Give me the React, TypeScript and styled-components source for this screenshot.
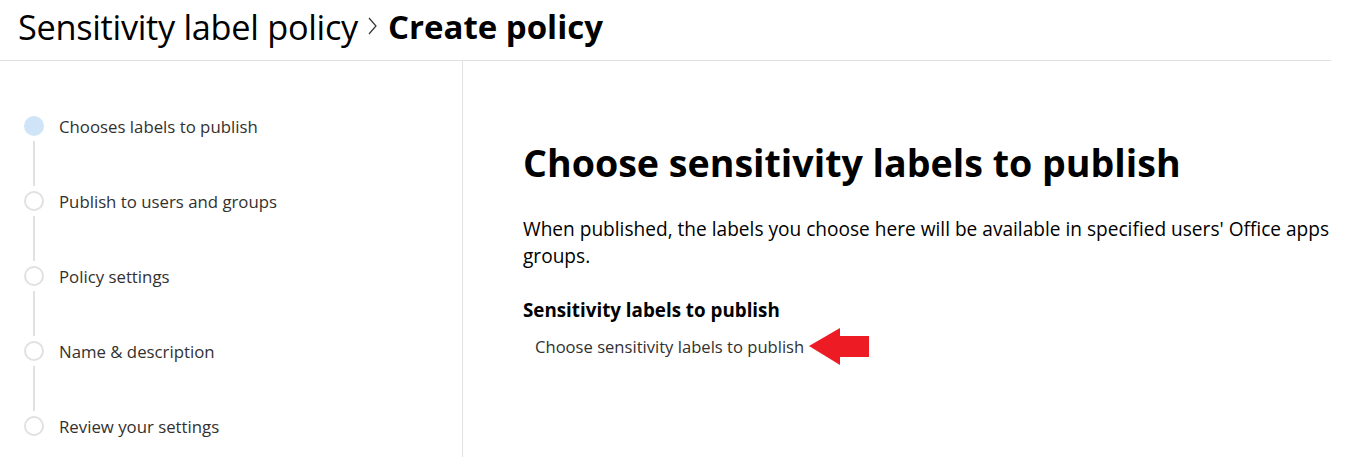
import styled, { createGlobalStyle } from "styled-components";

const GlobalStyle = createGlobalStyle`
  html, body {
    margin: 0;
    padding: 0;
    background: #ffffff;
    font-family: "Open Sans", "Noto Sans", sans-serif;
    color: #000000;
    overflow: hidden;
  }
`;

const Page = styled.div`
  width: 1331px;
  overflow: hidden;
`;

const Header = styled.header`
  height: 61px;
  border-bottom: 1px solid #e1e1e1;
  display: flex;
  align-items: center;
  padding: 0 0 8px 18px;
  box-sizing: border-box;
  white-space: nowrap;
`;

const Crumb = styled.span`
  font-size: 34.3px;
  font-weight: 400;
  letter-spacing: -0.3px;
`;

const Chevron = styled.svg`
  margin: 0 11px 0 10px;
  flex-shrink: 0;
`;

const Current = styled.span`
  font-size: 33px;
  font-weight: 700;
`;

const Body = styled.div`
  display: flex;
  height: 396px;
`;

const Sidebar = styled.nav`
  width: 463px;
  flex-shrink: 0;
  border-right: 1px solid #e1e1e1;
  padding: 55px 0 0 24px;
  box-sizing: border-box;
`;

const Step = styled.div`
  display: flex;
  align-items: center;
  gap: 15px;
  height: 20px;
  font-size: 16.8px;
  color: #323130;
`;

const Dot = styled.span<{ $active?: boolean }>`
  width: 20px;
  height: 20px;
  box-sizing: border-box;
  border-radius: 50%;
  flex-shrink: 0;
  background: ${(p) => (p.$active ? "#cfe4f7" : "#ffffff")};
  border: ${(p) => (p.$active ? "none" : "2px solid #e1e1e1")};
`;

const Connector = styled.div`
  width: 2px;
  height: 45px;
  margin: 5px 0 5px 9px;
  background: #e1e1e1;
`;

const Main = styled.main`
  flex: 1;
  padding: 77px 0 0 60px;
  min-width: 0;
  overflow: hidden;
`;

const Title = styled.h1`
  margin: 0;
  font-size: 37.6px;
  font-weight: 700;
  line-height: 50px;
  white-space: nowrap;
`;

const Intro = styled.p`
  margin: 28px 0 0;
  width: 900px;
  font-size: 19.1px;
  line-height: 27px;
  color: #000;
`;

const SectionLabel = styled.h2`
  margin: 28px 0 0;
  font-size: 18.8px;
  font-weight: 700;
  line-height: 24px;
`;

const PickerRow = styled.div`
  display: flex;
  align-items: center;
  margin-top: 6px;
  padding-left: 12px;
  height: 37px;
`;

const PickerLink = styled.span`
  font-size: 16.6px;
  color: #323130;
`;

const Arrow = styled.svg`
  margin-left: 5px;
  flex-shrink: 0;
`;

const steps = [
  "Chooses labels to publish",
  "Publish to users and groups",
  "Policy settings",
  "Name & description",
  "Review your settings",
];

export default function App() {
  return (
    <Page>
      <GlobalStyle />
      <Header>
        <Crumb>Sensitivity label policy</Crumb>
        <Chevron width="9" height="18" viewBox="0 0 9 18">
          <polyline
            points="1,1 8,9 1,17"
            fill="none"
            stroke="#333333"
            strokeWidth="1.2"
          />
        </Chevron>
        <Current>Create policy</Current>
      </Header>
      <Body>
        <Sidebar>
          {steps.map((s, i) => (
            <div key={s}>
              <Step>
                <Dot $active={i === 0} />
                {s}
              </Step>
              {i < steps.length - 1 && <Connector />}
            </div>
          ))}
        </Sidebar>
        <Main>
          <Title>Choose sensitivity labels to publish</Title>
          <Intro>
            When published, the labels you choose here will be available in
            specified users' Office apps and groups.
          </Intro>
          <SectionLabel>Sensitivity labels to publish</SectionLabel>
          <PickerRow>
            <PickerLink>Choose sensitivity labels to publish</PickerLink>
            <Arrow width="60" height="37" viewBox="0 0 60 37">
              <path
                d="M0 18 L31 0 L31 8 L60 8 L60 29 L31 29 L31 37 Z"
                fill="#ed1c24"
              />
            </Arrow>
          </PickerRow>
        </Main>
      </Body>
    </Page>
  );
}
